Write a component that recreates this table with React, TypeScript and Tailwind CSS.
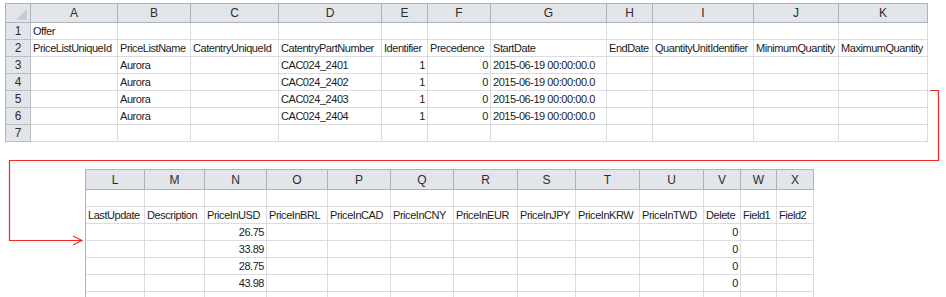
import React from "react";

type CellValue = string | { v: string; right: true };

const font = "font-['Liberation_Sans',Arial,sans-serif]";

const topLetters = ["A", "B", "C", "D", "E", "F", "G", "H", "I", "J", "K"];
const topRows: CellValue[][] = [
  ["Offer", "", "", "", "", "", "", "", "", "", ""],
  [
    "PriceListUniqueId",
    "PriceListName",
    "CatentryUniqueId",
    "CatentryPartNumber",
    "Identifier",
    "Precedence",
    "StartDate",
    "EndDate",
    "QuantityUnitIdentifier",
    "MinimumQuantity",
    "MaximumQuantity",
  ],
  ...["2401", "2402", "2403", "2404"].map((n): CellValue[] => [
    "",
    "Aurora",
    "",
    `CAC024_${n}`,
    { v: "1", right: true },
    { v: "0", right: true },
    "2015-06-19 00:00:00.0",
    "",
    "",
    "",
    "",
  ]),
  ["", "", "", "", "", "", "", "", "", "", ""],
];

const bottomLetters = ["L", "M", "N", "O", "P", "Q", "R", "S", "T", "U", "V", "W", "X"];
const blank13: CellValue[] = Array(13).fill("");
const bottomRows: CellValue[][] = [
  blank13,
  [
    "LastUpdate",
    "Description",
    "PriceInUSD",
    "PriceInBRL",
    "PriceInCAD",
    "PriceInCNY",
    "PriceInEUR",
    "PriceInJPY",
    "PriceInKRW",
    "PriceInTWD",
    "Delete",
    "Field1",
    "Field2",
  ],
  ...["26.75", "33.89", "28.75", "43.98"].map((p): CellValue[] => [
    "",
    "",
    { v: p, right: true },
    "",
    "",
    "",
    "",
    "",
    "",
    "",
    { v: "0", right: true },
    "",
    "",
  ]),
  blank13,
];

function ColHead({ label }: { label: string }) {
  return (
    <div className="flex items-center justify-center border-r border-b border-[#adb3ba] bg-[#e2e5e9] text-[12px] text-[#2d2d2d]">
      {label}
    </div>
  );
}

function RowHead({ label }: { label: string }) {
  return (
    <div className="flex items-center justify-center border-r border-b border-[#b9bec4] bg-[#e2e5e9] text-[12px] leading-[16px] text-[#2d2d2d]">
      {label}
    </div>
  );
}

function Cell({ value }: { value: CellValue }) {
  const isNum = typeof value !== "string";
  const text = typeof value === "string" ? value : value.v;
  return (
    <div
      className={
        isNum
          ? "flex items-end justify-end overflow-hidden whitespace-nowrap border-r border-b border-[#dadcdf] pr-[2px] pb-[1px] text-[11px] leading-[14px] tracking-[-0.45px] text-[#1c1c1c]"
          : "flex items-end overflow-hidden whitespace-nowrap border-r border-b border-[#dadcdf] pl-[2px] pb-[1px] text-[11px] leading-[14px] tracking-[-0.45px] text-[#1c1c1c]"
      }
    >
      {text}
    </div>
  );
}

function Corner() {
  return (
    <div className="flex items-end justify-end border-r border-b border-[#adb3ba] bg-[#e2e5e9] pr-[3px] pb-[2px]">
      <svg width="11" height="11" viewBox="0 0 11 11">
        <polygon points="11,0 11,11 0,11" fill="#c6cbd1" />
      </svg>
    </div>
  );
}

export default function App() {
  return (
    <div className={`relative h-[297px] w-[946px] overflow-hidden bg-white ${font}`}>
      {/* Upper sheet: columns A–K with row numbers */}
      <div className="ml-[5px] mt-[3px] w-max border-t border-l border-[#adb3ba]">
        <div className="grid grid-cols-[25px_87px_73px_88px_103px_46px_63px_116px_46px_101px_85px_89px] grid-rows-[19px_repeat(7,17px)]">
          <Corner />
          {topLetters.map((l) => (
            <ColHead key={l} label={l} />
          ))}
          {topRows.map((row, r) => (
            <React.Fragment key={r}>
              <RowHead label={String(r + 1)} />
              {row.map((v, c) => (
                <Cell key={c} value={v} />
              ))}
            </React.Fragment>
          ))}
        </div>
      </div>

      {/* Lower sheet: continuation columns L–X */}
      <div className="ml-[85px] mt-[27px] w-max border-t border-l border-[#adb3ba]">
        <div className="grid grid-cols-[59px_60px_62px_61px_63px_63px_64px_58px_64px_64px_37px_36px_37px] grid-rows-[20px_repeat(7,17px)]">
          {bottomLetters.map((l) => (
            <ColHead key={l} label={l} />
          ))}
          {bottomRows.map((row, r) => (
            <React.Fragment key={r}>
              {row.map((v, c) => (
                <Cell key={c} value={v} />
              ))}
            </React.Fragment>
          ))}
        </div>
      </div>

      {/* Connector arrow from the upper sheet to the lower one */}
      <svg
        className="pointer-events-none absolute left-0 top-0"
        width="946"
        height="297"
        viewBox="0 0 946 297"
      >
        <polyline
          points="930,90.5 938.5,90.5 938.5,160.5 9.5,160.5 9.5,240.5 81.5,240.5"
          fill="none"
          stroke="#ee2b2b"
          strokeWidth="1.2"
        />
        <polyline
          points="73,236 82,240.5 73,245"
          fill="none"
          stroke="#ee2b2b"
          strokeWidth="1.2"
        />
      </svg>
    </div>
  );
}
